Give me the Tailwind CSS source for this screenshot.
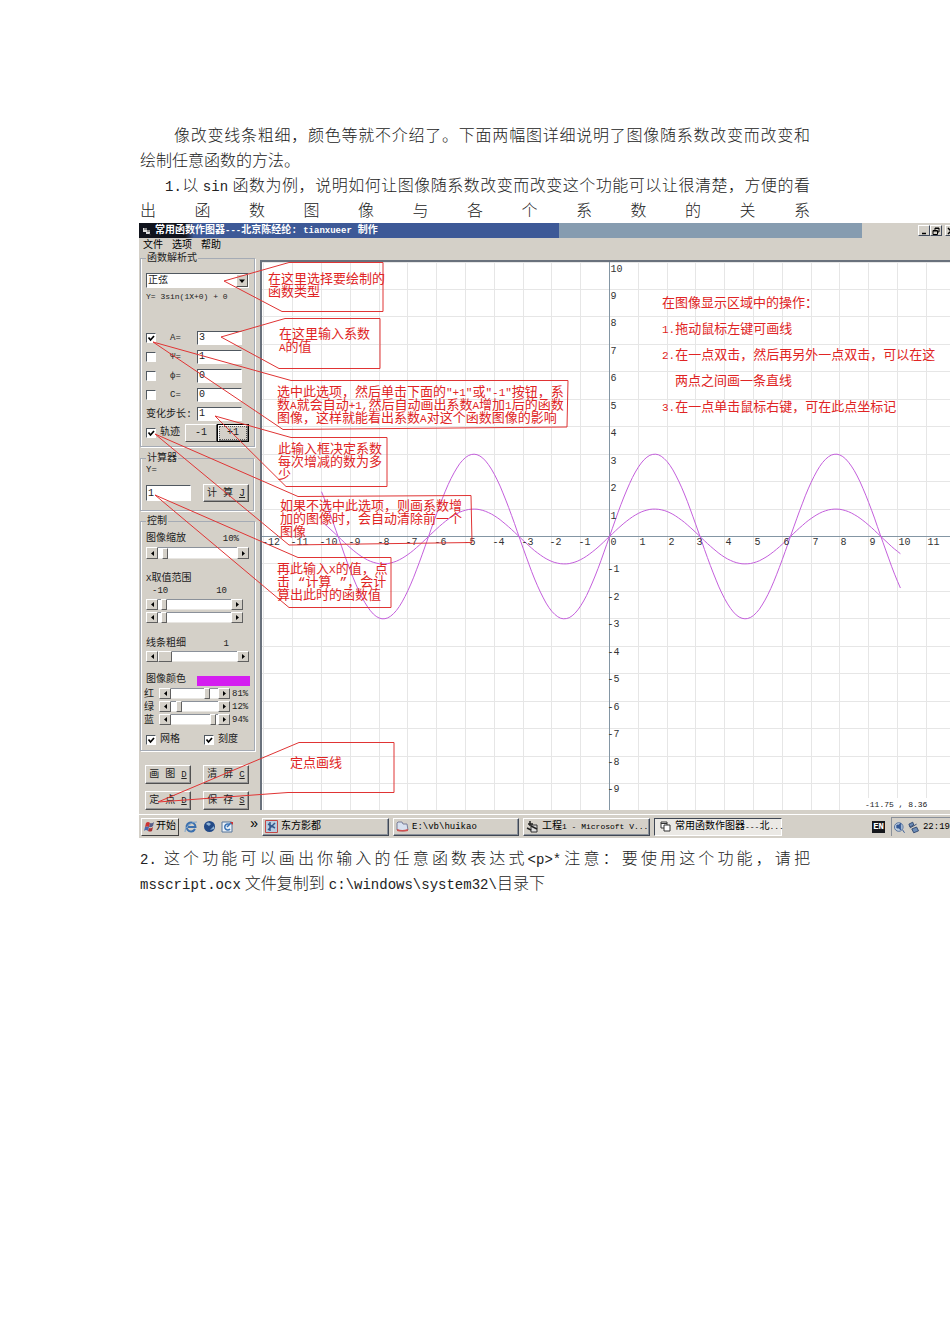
<!DOCTYPE html>
<html lang="zh-CN">

<head>
  <meta charset="UTF-8">
  <meta name="viewport" content="width=device-width, initial-scale=1.0">
  <title>常用函数作图器</title>
  <script src="https://cdn.jsdelivr.net/npm/@tailwindcss/browser@4"></script>
</head>

<body class="bg-white text-black font-['Liberation_Mono','Noto_Sans_CJK_SC',monospace] overflow-x-hidden">
  <main class="pt-[125px]">
    <!-- Introduction -->
    <div class="mx-[140px] -mb-[2px] text-[16px] leading-[25px] font-light text-[#222]">
      <p class="pl-[34px] [text-align-last:justify] whitespace-nowrap">像改变线条粗细，颜色等就不介绍了。下面两幅图详细说明了图像随系数改变而改变和</p>
      <p class="whitespace-nowrap">绘制任意函数的方法。</p>
      <p class="pl-[25px] [text-align-last:justify] whitespace-nowrap"><span class="text-sm leading-none">1.</span>以<span class="mx-1 text-sm leading-none">sin</span>函数为例，说明如何让图像随系数改变而改变这个功能可以让很清楚，方便的看</p>
      <p class="[text-align-last:justify] whitespace-nowrap">出 函 数 图 像 与 各 个 系 数 的 关 系</p>
    </div>

    <!-- Application window -->
    <div class="relative ml-[139px] overflow-hidden bg-[#d4d0c8] text-[10px] leading-[12px]">
      <!-- Title bar -->
      <header class="flex h-[15px]">
        <h1 class="flex w-[420px] items-center gap-[3px] bg-linear-to-r from-[#10131c] from-11% to-[#3d5997] to-13% pt-px pl-[3px] font-bold text-white whitespace-nowrap">
          <svg class="size-[10px]" viewBox="0 0 10 10"><path d="M1 2h4v2h3v4H4V6H1z" fill="#ddd"/><path d="M2 3h3M5 5h3M7 8l2 1" stroke="#333" fill="none"/></svg>
          <span>常用函数作图器<span class="text-[9px]">---</span>北京陈经纶: <span class="text-[9px]">tianxueer</span> 制作</span>
        </h1>
        <div class="w-[303px] bg-[#869cb0]"></div>
        <div class="-mr-[7px] ml-auto flex items-center">
          <button aria-label="最小化" class="flex h-[11px] w-[12px] items-center justify-center border border-t-white border-l-white border-r-[#404a5c] border-b-[#404a5c]"><svg class="size-[8px]" viewBox="0 0 8 8"><path d="M2 6.5h4" stroke="#000" stroke-width="1.5"/></svg></button>
          <button aria-label="还原" class="flex h-[11px] w-[12px] items-center justify-center border border-t-white border-l-white border-r-[#404a5c] border-b-[#404a5c]"><svg class="size-[8px]" viewBox="0 0 8 8"><path d="M3 3V1h4v4H6M1 3.5h4.5v4H1zM3 1.500h4M1 4h4" stroke="#000" fill="none"/></svg></button>
          <button aria-label="关闭" class="ml-[3px] flex h-[11px] w-[12px] items-center justify-center border border-t-white border-l-white border-r-[#404a5c] border-b-[#404a5c]"><svg class="size-[8px]" viewBox="0 0 8 8"><path d="M1 1l6 6M7 1L1 7" stroke="#000" stroke-width="1.500"/></svg></button>
        </div>
      </header>

      <!-- Menu -->
      <nav class="flex h-[14px] items-end gap-[9px] pl-[4px]">
        <a href="#">文件</a>
        <a href="#">选项</a>
        <a href="#">帮助</a>
      </nav>

      <div class="flex h-[562px]">
        <!-- Control panel -->
        <form class="w-[121px] shrink-0 pl-px text-[#222]" onsubmit="return false">
          <fieldset class="w-[114px] border border-[#a5abb5] px-[5px] pb-[4px] shadow-[inset_1px_0_#fff,1px_1px_#fff]">
            <legend class="h-[12px] px-px leading-[14px]">函数解析式</legend>
            <div class="mt-[9px] grid h-[15px] w-[103px] border border-t-[#505860] border-l-[#505860] border-r-white border-b-white bg-white">
              <select aria-label="函数类型" class="[grid-area:1/1] appearance-none bg-white px-px leading-[12px] outline-none">
                <option>正弦</option>
              </select>
              <span class="pointer-events-none [grid-area:1/1] flex w-[12px] items-center justify-center justify-self-end border border-t-white border-l-white border-r-[#505050] border-b-[#505050] bg-[#d4d0c8]">
                <svg class="size-[6px]" viewBox="0 0 6 6"><path d="M0 1.500h6L3 5z"/></svg>
              </span>
            </div>
            <p class="h-[18px] text-[8px] leading-[18px] whitespace-pre">Y= 3sin(1X+0) + 0</p>
            <div id="params" class="mt-[22px]"></div>
            <div class="flex h-[19px] items-center whitespace-nowrap">
              <label for="step" class="w-[51px] pt-[2px]">变化步长:</label>
              <input id="step" value="1" class="h-[14px] w-[45px] border border-t-[#505860] border-l-[#505860] border-r-white border-b-white bg-white px-px text-[10px] outline-none">
            </div>
            <div class="flex h-[19px] items-center">
              <label class="flex w-[39px] items-center gap-[4px] whitespace-nowrap" data-check="on">轨迹</label>
              <button class="h-[18px] w-[32px] border border-t-white border-l-white border-r-[#505050] border-b-[#505050]">-1</button>
              <button class="h-[18px] w-[32px] border border-black p-px shadow-[inset_1px_1px_#fff,inset_-1px_-1px_#707070]"><span class="block border border-dotted border-[#555] leading-[12px]">+1</span></button>
            </div>
          </fieldset>

          <fieldset class="mt-[5px] w-[114px] border border-[#a5abb5] px-[5px] pb-[8px] shadow-[inset_1px_0_#fff,1px_1px_#fff]">
            <legend class="h-[12px] px-px leading-[14px]">计算器</legend>
            <label for="xval" class="block text-[9px]">Y=</label>
            <div class="mt-[8px] flex h-[18px] items-center justify-between">
              <input id="xval" value="1" class="h-[16px] w-[45px] border border-t-[#505860] border-l-[#505860] border-r-white border-b-white bg-white px-px outline-none">
              <button class="mr-[-1px] h-[18px] w-[46px] border border-t-white border-l-white border-r-[#505050] border-b-[#505050] pt-px shadow-[inset_-1px_-1px_#999] whitespace-nowrap">计 算 <u>J</u></button>
            </div>
          </fieldset>

          <fieldset class="mt-[4px] w-[114px] border border-[#a5abb5] px-[5px] pb-[4px] shadow-[inset_1px_0_#fff,1px_1px_#fff]">
            <legend class="h-[12px] px-px leading-[14px]">控制</legend>
            <div class="mt-[6px] flex justify-between pr-[10px]"><label for="zoom">图像缩放</label><output class="text-[9px]">10%</output></div>
            <div class="mt-[2px] h-[12px] w-[103px]" data-scroll="zoom" data-value="5" data-name="图像缩放"></div>
            <div class="mt-[14px]"><span class="text-[9px]">X</span>取值范围</div>
            <div class="flex justify-between pr-[22px] pl-[6px] text-[9px]"><output>-10</output><output>10</output></div>
            <div class="mt-[2px] h-[11px] w-[97px]" data-scroll="xmin" data-value="5" data-name="X最小值"></div>
            <div class="mt-[2px] h-[11px] w-[97px]" data-scroll="xmax" data-value="5" data-name="X最大值"></div>
            <div class="mt-[15px] flex justify-between pr-[20px]"><label for="thick">线条粗细</label><output class="text-[9px]">1</output></div>
            <div class="mt-px h-[11px] w-[103px]" data-scroll="thick" data-value="0" data-wide="1" data-name="线条粗细"></div>
            <div class="mt-[12px] flex h-[13px] items-start justify-between"><span>图像颜色</span><span class="mt-[2px] -mr-px h-[10px] w-[53px] bg-[#d41ef0]"></span></div>
            <div class="-ml-[2px] flex h-[13px] items-center whitespace-nowrap"><label for="red" class="w-[15px] pt-[2px]">红</label><div class="h-[11px] w-[71px]" data-scroll="red" data-value="80" data-name="红"></div><output class="ml-[2px] text-[9px]">81%</output></div>
            <div class="-ml-[2px] flex h-[13px] items-center whitespace-nowrap"><label for="green" class="w-[15px] pt-[2px]">绿</label><div class="h-[11px] w-[71px]" data-scroll="green" data-value="12" data-name="绿"></div><output class="ml-[2px] text-[9px]">12%</output></div>
            <div class="-ml-[2px] flex h-[13px] items-center whitespace-nowrap"><label for="blue" class="w-[15px] pt-[2px]">蓝</label><div class="h-[11px] w-[71px]" data-scroll="blue" data-value="94" data-name="蓝"></div><output class="ml-[2px] text-[9px]">94%</output></div>
            <div class="mt-[7px] flex h-[13px] whitespace-nowrap">
              <label class="flex w-[58px] items-center gap-[4px]" data-check="on">网格</label>
              <label class="flex items-center gap-[4px]" data-check="on">刻度</label>
            </div>
          </fieldset>

          <div class="mt-[14px] ml-[5px] grid w-[104px] grid-cols-2 gap-x-[12px] gap-y-[7px] whitespace-nowrap">
            <button class="h-[19px] border border-t-white border-l-white border-r-[#505050] border-b-[#505050] pt-px shadow-[inset_-1px_-1px_#999]">画 图 <u class="text-[9px]">D</u></button>
            <button class="h-[19px] border border-t-white border-l-white border-r-[#505050] border-b-[#505050] pt-px shadow-[inset_-1px_-1px_#999]">清 屏 <u class="text-[9px]">C</u></button>
            <button class="h-[19px] border border-t-white border-l-white border-r-[#505050] border-b-[#505050] pt-px shadow-[inset_-1px_-1px_#999]">定 点 <u class="text-[9px]">D</u></button>
            <button class="h-[19px] border border-t-white border-l-white border-r-[#505050] border-b-[#505050] pt-px shadow-[inset_-1px_-1px_#999]">保 存 <u class="text-[9px]">S</u></button>
          </div>
        </form>

        <!-- Plot area -->
        <section class="mt-[8px] mb-[4px] flex-1 border-t-2 border-l-2 border-t-[#69717c] border-l-[#69717c] bg-white">
          <svg id="plot" class="block h-full w-full" role="img" aria-label="正弦函数图像"></svg>
        </section>
      </div>

      <!-- Taskbar -->
      <footer class="flex h-[24px] items-center border-t border-white pl-[2px] whitespace-nowrap">
        <button class="flex h-[18px] w-[38px] items-center border border-t-white border-l-white border-r-[#404040] border-b-[#404040] pl-px">
          <svg class="size-[13px]" viewBox="0 0 13 13"><path d="M3 3q2-2 4 0l-1 4q-2-1-4 0z" fill="#c33"/><path d="M7 3q2 1 4-1l-1 4q-2 2-4 1z" fill="#555f8a"/><path d="M2 7q2-1 4 0l-1 4q-2-2-4 0z" fill="#4868ac"/><path d="M6 8q2 1 4-1l-1 4q-2 1-4 0z" fill="#a33"/></svg>
          开始
        </button>
        <a href="#" aria-label="Internet Explorer" class="ml-[5px]"><svg class="size-[14px]" viewBox="0 0 14 14"><path d="M11 9a4.500 4.500 0 1 1 .5-2H4" fill="none" stroke="#3c70ae" stroke-width="2"/><path d="M1 12Q0 9 5 5t8-3" fill="none" stroke="#7fa5cb"/></svg></a>
        <a href="#" aria-label="浏览器" class="ml-[5px]"><svg class="size-[13px]" viewBox="0 0 13 13"><circle cx="6.500" cy="6.500" r="5.500" fill="#234a87"/><path d="M3 4q2-3 5 0L6 6zM7 10l4-4v3z" fill="#8fb3d6"/></svg></a>
        <a href="#" aria-label="Outlook" class="ml-[4px]"><svg class="size-[14px]" viewBox="0 0 14 14"><path d="M2 2h9l1 3v7H2z" fill="#e9f0f7" stroke="#54749b"/><path d="M10 5a3 3 0 1 0 0 4M7 7l5-5" fill="none" stroke="#3b73b4" stroke-width="1.500"/><path d="M10 2h3v3z" fill="#c33"/></svg></a>
        <span class="mb-[6px] ml-[16px] w-[12px] text-[14px]">»</span>
        <div class="flex gap-[4px]">
          <button class="flex h-[18px] w-[127px] items-center gap-[3px] border border-t-white border-l-white border-r-[#404855] border-b-[#404855] pl-[2px] shadow-[inset_-1px_-1px_#8b919a]">
            <svg class="size-[13px]" viewBox="0 0 13 13"><path d="M.5.5h12v12H.5z" fill="#b7cce0" stroke="#c34646"/><path d="M3 10l7-7M3 4l7 4M5 2v9" stroke="#34578c" stroke-width="1.500"/></svg>东方影都
          </button>
          <button class="flex h-[18px] w-[126px] items-center gap-[3px] border border-t-white border-l-white border-r-[#404855] border-b-[#404855] pl-[2px] shadow-[inset_-1px_-1px_#8b919a]">
            <svg class="size-[13px]" viewBox="0 0 13 13"><path d="M1 10V3l1-1h4l1 2h4l1 6q-5 2-11 0z" fill="#d8e1ef" stroke="#7a7f99"/><path d="M1 9q5 2 11 0v2q-6 1-11 0z" fill="#d05050"/></svg><span class="text-[9px]">E:\vb\huikao</span>
          </button>
          <button class="flex h-[18px] w-[127px] items-center gap-[3px] border border-t-white border-l-white border-r-[#404855] border-b-[#404855] pl-[2px] shadow-[inset_-1px_-1px_#8b919a]">
            <svg class="size-[13px] shrink-0" viewBox="0 0 13 13"><path d="M5 5h6v7H5z" fill="#ddd" stroke="#333"/><path d="M5 6l6 3M2 4h5M4 1v5M1 8l4 2" stroke="#222" stroke-width="1.500"/></svg><span>工程<span class="text-[8px]">1 - Microsoft V...</span></span>
          </button>
          <button class="flex h-[18px] w-[128px] items-center gap-[4px] border border-t-[#404855] border-l-[#404855] border-r-white border-b-white bg-[#ebe9e5] pl-[5px]">
            <svg class="size-[11px] shrink-0" viewBox="0 0 11 11"><path d="M1 1h6v3h3v6H4V7H1zM1 2.500h6M4 7V4h3" fill="#fff" stroke="#333"/></svg><span>常用函数作图器<span class="text-[8px]">---</span>北<span class="text-[8px]">...</span></span>
          </button>
        </div>
        <span class="ml-auto bg-[#15171c] px-px text-[9px] font-bold text-white">EN</span>
        <div class="ml-[6px] flex h-[19px] w-[59px] shrink-0 items-center border-t border-l border-t-[#8b919a] border-l-[#8b919a] pl-px">
          <svg class="size-[13px]" viewBox="0 0 13 13"><circle cx="6" cy="6" r="4.500" fill="#bccde0" stroke="#55719c"/><path d="M4 4h2l2-2v7L6 7H4zM10 9l2 3" fill="#365a95" stroke="#365a95"/></svg>
          <svg class="ml-[2px] size-[13px]" viewBox="0 0 13 13"><path d="M2 3l4-2 1 3-4 2zM5 8l5-2 2 4-5 2z" fill="#6d8db8" stroke="#334a72"/><path d="M3 7l7-4" stroke="#334a72"/></svg>
          <time class="ml-[3px] text-[9px]">22:19</time>
        </div>
      </footer>

      <!-- Callouts over the window -->
      <svg class="pointer-events-none absolute top-0 left-0 h-[615px] w-[811px]" viewBox="139 223 811 615" fill="none" stroke="#e03434">
        <path d="M224 281L289 262.500H383V311.500H282Z"/>
        <path d="M221 337L285 318.500H380V368.500H279Z"/>
        <path d="M153 342L291 380.500H568L567 427L283 429.500Z"/>
        <path d="M215 416L291 437.500H387V486.500H286Z"/>
        <path d="M155 434L298 496.500L471 495.500L472 542.500L289 545Z"/>
        <path d="M155 495L298 557.500H391V607.500H289Z"/>
        <path d="M158 802L299 742.500H394V792.500H288Z"/>
      </svg>
      <div class="pointer-events-none text-[13px] leading-[13px] whitespace-nowrap text-[#e02424]">
        <p class="absolute top-[50px] left-[129px]">在这里选择要绘制的<br>函数类型</p>
        <p class="absolute top-[105px] left-[140px]">在这里输入系数<br><span class="text-[11px] leading-none">A</span>的值</p>
        <p class="absolute top-[163px] left-[138px]">选中此选项，然后单击下面的<span class="text-[11px] leading-none">"+1"</span>或<span class="text-[11px] leading-none">"-1"</span>按钮，系<br>数<span class="text-[11px] leading-none">A</span>就会自动<span class="text-[11px] leading-none">+1,</span>然后自动画出系数<span class="text-[11px] leading-none">A</span>增加<span class="text-[11px] leading-none">1</span>后的函数<br>图像，这样就能看出系数<span class="text-[11px] leading-none">A</span>对这个函数图像的影响</p>
        <p class="absolute top-[220px] left-[139px]">此输入框决定系数<br>每次增减的数为多<br>少</p>
        <p class="absolute top-[277px] left-[141px]">如果不选中此选项，则画系数增<br>加的图像时，会自动清除前一个<br>图像</p>
        <p class="absolute top-[340px] left-[138px]">再此输入<span class="text-[11px] leading-none">X</span>的值，点<br>击 “计算 ”，会计<br>算出此时的函数值</p>
        <p class="absolute top-[534px] left-[151px]">定点画线</p>
        <div class="absolute top-[68px] left-[523px] leading-[26px]">
          <p>在图像显示区域中的操作：</p>
          <p><span class="text-[11px] leading-none">1.</span>拖动鼠标左键可画线</p>
          <p><span class="text-[11px] leading-none">2.</span>在一点双击，然后再另外一点双击，可以在这</p>
          <p class="pl-[13px]">两点之间画一条直线</p>
          <p><span class="text-[11px] leading-none">3.</span>在一点单击鼠标右键，可在此点坐标记</p>
        </div>
      </div>
    </div>

    <!-- Second section -->
    <div class="mx-[140px] mt-[10px] text-[16px] leading-[25px] font-light text-[#222]">
      <p class="[text-align-last:justify] whitespace-nowrap"><span class="mr-1 text-sm leading-none">2.</span>这个功能可以画出你输入的任意函数表达式<span class="text-sm leading-none">&lt;p&gt;*</span>注意：要使用这个功能，请把</p>
      <p class="whitespace-nowrap"><span class="mr-1 text-sm leading-none">msscript.ocx</span>文件复制到<span class="ml-1 text-sm leading-none">c:\windows\system32\</span>目录下</p>
    </div>
  </main>

  <script>
    // Coefficient rows
    const params = [['A', '3', true], ['Ψ', '1', false], ['ф', '0', false], ['C', '0', false]];
    document.getElementById('params').innerHTML = params.map(([name, value, on]) => `
      <div class="flex h-[19px] items-center">
        <label class="flex w-[24px]" aria-label="${name} 变化" data-check="${on ? 'on' : ''}"></label>
        <label for="p${name}" class="w-[27px] text-[9px]">${name}=</label>
        <input id="p${name}" value="${value}" class="h-[14px] w-[45px] border border-t-[#505860] border-l-[#505860] border-r-white border-b-white bg-white px-px text-[10px] outline-none">
      </div>`).join('');

    // Tick boxes
    document.querySelectorAll('[data-check]').forEach(label => {
      label.insertAdjacentHTML('afterbegin', `
        <span class="grid size-[10px] shrink-0">
          <input type="checkbox" ${label.dataset.check ? 'checked' : ''} class="peer [grid-area:1/1] size-[10px] appearance-none border border-t-[#505860] border-l-[#505860] border-r-white border-b-white bg-white">
          <svg class="pointer-events-none [grid-area:1/1] hidden size-[10px] peer-checked:block" viewBox="0 0 10 10"><path d="M2.500 4.500l2 2.500 3.500-4" fill="none" stroke="#000" stroke-width="1.700"/></svg>
        </span>`);
    });

    // Scroll bars
    document.querySelectorAll('[data-scroll]').forEach(bar => {
      const { scroll, value, wide, name } = bar.dataset;
      const thumb = wide ? '[&::-webkit-slider-thumb]:w-[14px]' : '[&::-webkit-slider-thumb]:w-[6px]';
      const arrow = (d, text) => `
        <button type="button" aria-label="${name}${text}" class="flex w-[12px] shrink-0 items-center justify-center border border-t-white border-l-white border-r-[#606060] border-b-[#606060] bg-[#d4d0c8]">
          <svg class="size-[5px]" viewBox="0 0 5 5"><path d="${d}"/></svg>
        </button>`;
      bar.classList.add('flex');
      bar.innerHTML = arrow('M4 0v5L1 2.500z', '减') + `
        <input type="range" id="${scroll}" value="${value}" aria-label="${name}" class="h-full min-w-0 flex-1 appearance-none border-y border-t-[#8b919a] border-b-[#e8e6e2] bg-white [&::-webkit-slider-thumb]:h-[11px] [&::-webkit-slider-thumb]:appearance-none [&::-webkit-slider-thumb]:border [&::-webkit-slider-thumb]:border-t-white [&::-webkit-slider-thumb]:border-l-white [&::-webkit-slider-thumb]:border-r-[#606060] [&::-webkit-slider-thumb]:border-b-[#606060] [&::-webkit-slider-thumb]:bg-[#d4d0c8] ${thumb}">` + arrow('M1 0v5l3-2.500z', '增');
    });

    // Plot: grid, axes, labels and both curves
    const ox = 347.5, oy = 274.5, ux = 28.8, uy = 27.45;
    let grid = '', labels = '';
    for (let i = -12; i <= 11; i++) {
      const x = Math.floor(ox + i * ux) + 0.5;
      grid += `M${x} 0V548`;
      labels += `<text x="${i < 0 ? Math.max(x - 2, 0) : x + 1}" y="283">${i}</text>`;
    }
    for (let i = -9; i <= 10; i++) {
      const y = Math.floor(oy - i * uy) + 0.5;
      grid += `M0 ${y}H900`;
      if (i !== 0) labels += `<text x="${i < 0 ? ox - 2 : ox + 1}" y="${i < 0 ? y + 8 : y + 9}">${i}</text>`;
    }
    const curve = a => {
      const points = [];
      for (let x = -10; x <= 10.1; x += 0.1) {
        points.push((ox + x * ux).toFixed(1) + ',' + (oy - a * Math.sin(x) * uy).toFixed(1));
      }
      return `<polyline points="${points.join(' ')}" fill="none" stroke="#c45fdc"/>`;
    };
    document.getElementById('plot').innerHTML = `
      <path d="${grid}" stroke="#e6e6e6"/>
      <path d="M0 ${oy}H900M${ox} 0V548" stroke="#8496a4"/>
      ${curve(1)}${curve(3)}
      <g fill="#333" class="text-[10px]">${labels}</g>
      <rect x="600" y="536" width="68" height="12" fill="#fff"/>
      <text x="603" y="545" fill="#222" class="text-[8px]">-11.75 , 8.36</text>`;
  </script>
</body>

</html>
